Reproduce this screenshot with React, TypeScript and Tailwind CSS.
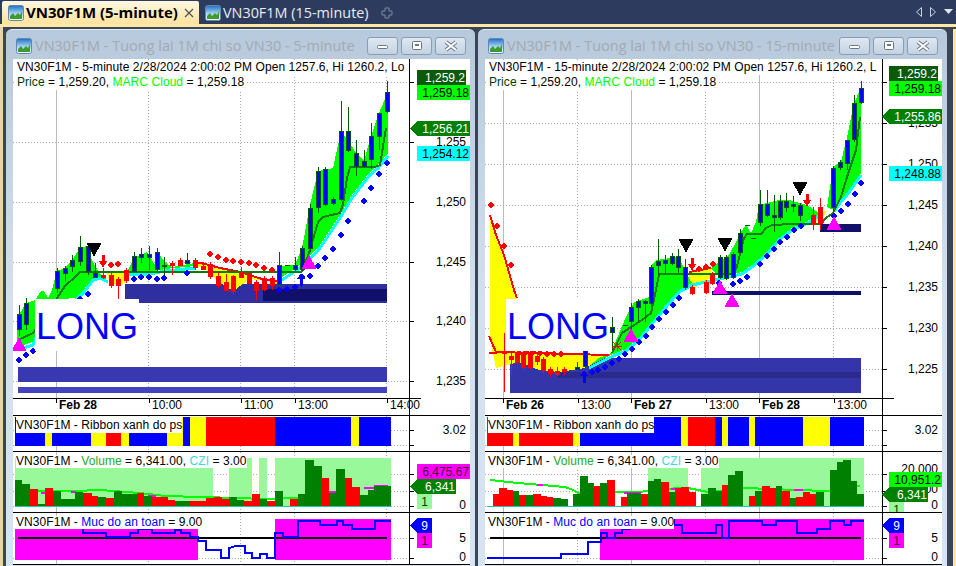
import type { ReactNode } from 'react';

type Candle = [number, number, number, number, number, 'b' | 'r'];
type Bar = [number, number, number, 'g' | 'r'];
type Seg = [number, number, string];
type Tag = { x: number; y: number; w: number; h?: number; fill: string; color: string; text: string; arrow?: boolean };

const FONT = "font-['Liberation_Sans',Arial,sans-serif]";
const GREEN = '#008000';
const LIME = '#00ff00';
const BLUE = '#0000ff';
const RED = '#ff0000';
const MAGENTA = '#ff00ff';
const YELLOW = '#ffff00';

interface ChartConfig {
  x0: number;
  axisX: number;
  title: string;
  head: string;
  grid: number[];
  solid: number[];
  prices: [string, number][];
  priceGrid: number[];
  times: [string, number, boolean][];
  rects: [number, number, number, number, string][];
  clouds: string[];
  yellows: string[];
  cyans: string[];
  redLines: string[];
  emaDark: string[];
  emaBright: string[];
  candles: Candle[];
  blueDots: [number, number][];
  redDots: [number, number][];
  blackTri: [number, number][];
  magentaTri: [number, number][];
  redArrows: [number, number][];
  blueArrows: [number, number][];
  priceTags: Tag[];
  longBox: [number, number];
  ribbon: Seg[];
  lightGreen: [number, number, number][];
  bars: Bar[];
  maLine: string;
  maBits: [number, number, number][];
  volTicks: [string, number][];
  volTags: Tag[];
  safetyFill: [number, number, number, number][];
  safetyLine: string;
  blackLine: [number, number];
  safetyTags: Tag[];
  axisRight: number;
}

const left: ChartConfig = {
  x0: 13,
  axisX: 409,
  title: 'VN30F1M - Tuong lai 1M chi so VN30 - 5-minute',
  head: 'VN30F1M - 5-minute 2/28/2024 2:00:02 PM Open 1257.6, Hi 1260.2, Lo',
  grid: [148, 240, 294, 386],
  solid: [56],
  priceGrid: [82, 142, 202, 262, 321, 381],
  prices: [['1,255', 142], ['1,250', 202], ['1,245', 262], ['1,240', 321], ['1,235', 381]],
  times: [['Feb 28', 59, true], ['10:00', 152, false], ['11:00', 244, false], ['13:00', 298, false], ['14:00', 390, false]],
  rects: [
    [125, 284, 262, 19, '#2f2f9f'],
    [263, 289, 124, 12, '#10106b'],
    [18, 367, 369, 15, '#3838b0'],
    [18, 387, 369, 6, '#4444bf'],
  ],
  clouds: [
    '17,347 17,335 19,315 26,303 35,300 41,291 44,291 48,298 52,290 57,271 65,268 72,260 80,248 86,246 93,262 100,274 108,280 100,277 93,279 85,288 75,298 50,300 33,342',
    '127,272 134,258 141,255 147,252 155,265 157,252 165,262 172,267 195,263 195,266 165,269 150,272',
    '279,279 279,266 295,265 302,248 310,205 318,171 333,168 341,131 348,140 356,153 364,161 371,136 379,113 388,92 388,153 378,165 370,172 362,182 352,195 340,215 330,230 320,245 310,256 300,265',
  ],
  yellows: [
    '107,273 126,272 127,283 110,285',
    '195,263 205,264 220,268 240,272 262,279 280,282 280,285 267,281 250,279 233,291 217,281 205,268 195,266',
  ],
  cyans: [
    '17,350 33,345 50,303 75,301 85,291 93,280 100,278 108,282',
    '127,274 150,274 165,271 195,268',
    '279,282 300,268 310,259 320,248 330,233 340,218 352,198 362,185 370,175 378,168 388,156',
  ],
  redLines: ['195,262 205,264 220,268 240,272 262,279 280,282'],
  emaDark: ['18,340 33,333 50,310 57,298 65,286 75,277 80,272', '302,272 310,250 318,222 323,217 340,213 343,204 347,178 350,167 375,167 380,165 386,128'],
  emaBright: ['80,272 302,272'],
  candles: [
    [19, 314, 329, 305, 336, 'b'], [26, 303, 324, 298, 330, 'b'],
    [57, 271, 288, 268, 293, 'b'], [65, 268, 273, 266, 281, 'b'], [72, 260, 266, 255, 272, 'b'], [80, 247, 261, 236, 266, 'b'],
    [88, 246, 271, 243, 275, 'b'], [95, 273, 277, 263, 278, 'b'], [103, 275, 277, 268, 279, 'r'], [111, 275, 285, 272, 288, 'r'],
    [118, 279, 285, 277, 299, 'r'], [126, 270, 280, 268, 283, 'r'], [134, 256, 271, 252, 273, 'b'], [141, 254, 257, 248, 263, 'b'],
    [149, 254, 257, 246, 270, 'b'], [157, 252, 269, 248, 271, 'b'], [164, 265, 266, 257, 277, 'b'], [172, 263, 265, 261, 275, 'r'],
    [180, 260, 265, 258, 266, 'r'], [187, 260, 263, 253, 264, 'b'], [195, 260, 267, 258, 270, 'r'], [203, 266, 269, 262, 270, 'r'],
    [210, 264, 276, 262, 279, 'r'], [218, 276, 285, 272, 288, 'r'], [226, 282, 290, 274, 291, 'r'], [233, 276, 291, 275, 295, 'r'],
    [241, 272, 277, 267, 278, 'r'], [249, 273, 283, 272, 284, 'r'], [256, 282, 290, 280, 300, 'r'], [264, 278, 289, 276, 291, 'r'],
    [272, 278, 285, 276, 290, 'r'], [279, 265, 284, 252, 286, 'b'], [287, 265, 265, 265, 265, 'b'], [295, 265, 269, 257, 271, 'b'],
    [302, 248, 269, 246, 271, 'b'], [310, 208, 248, 204, 252, 'b'], [318, 171, 207, 167, 213, 'b'], [325, 169, 204, 167, 206, 'b'],
    [333, 199, 203, 197, 205, 'b'], [341, 131, 199, 101, 201, 'b'], [348, 131, 150, 107, 152, 'b'], [356, 153, 166, 140, 176, 'b'],
    [364, 161, 166, 150, 168, 'b'], [371, 136, 159, 123, 169, 'b'], [379, 113, 136, 113, 150, 'b'], [387, 92, 111, 81, 113, 'b'],
  ],
  blueDots: [[19, 360], [26, 355], [33, 351], [80, 299], [88, 294], [134, 279], [141, 277], [149, 277], [157, 279], [164, 278], [187, 273], [279, 290], [287, 289], [295, 287], [302, 277], [310, 276], [318, 266], [325, 258], [333, 249], [341, 235], [348, 221], [364, 201], [371, 188], [379, 174], [387, 163]],
  redDots: [[111, 265], [118, 264], [210, 254], [218, 257], [226, 260], [233, 261], [241, 262], [249, 263], [256, 265], [264, 268], [272, 270]],
  blackTri: [[94, 243]],
  magentaTri: [[19, 337], [309, 255]],
  redArrows: [[103, 255]],
  blueArrows: [[301, 273]],
  priceTags: [
    { x: 417, y: 70, w: 49, fill: '#0a5a0a', color: '#ffffff', text: '1,259.2' },
    { x: 417, y: 85, w: 53, fill: LIME, color: '#000000', text: '1,259.18' },
    { x: 417, y: 121, w: 53, fill: GREEN, color: '#ffffff', text: '1,256.21', arrow: true },
    { x: 417, y: 146, w: 53, fill: '#00ffff', color: '#000000', text: '1,254.12' },
  ],
  longBox: [22, 240],
  ribbon: [[15, 45, BLUE], [45, 52, YELLOW], [52, 91, BLUE], [91, 106, YELLOW], [106, 121, RED], [121, 129, YELLOW], [129, 167, BLUE], [167, 183, YELLOW], [183, 190, BLUE], [190, 206, YELLOW], [206, 275, RED], [275, 351, BLUE], [351, 359, YELLOW], [359, 391, BLUE]],
  lightGreen: [[15, 213, 458], [229, 252, 458], [259, 267, 458], [275, 391, 458]],
  bars: [
    [15, 22, 480, 'g'], [22, 30, 484, 'g'], [29, 38, 489, 'r'], [38, 45, 504, 'g'], [45, 53, 488, 'r'], [53, 61, 491, 'g'], [61, 75, 499, 'g'], [75, 83, 492, 'g'], [83, 92, 493, 'r'], [92, 98, 496, 'r'],
    [98, 106, 497, 'g'], [106, 114, 498, 'r'], [114, 122, 491, 'g'], [122, 137, 494, 'g'], [137, 144, 493, 'r'], [144, 152, 496, 'g'], [152, 168, 497, 'r'], [168, 175, 500, 'r'], [175, 190, 501, 'g'], [190, 206, 501, 'r'],
    [206, 214, 498, 'r'], [214, 222, 497, 'r'], [222, 229, 499, 'r'], [229, 237, 497, 'g'], [237, 244, 500, 'g'], [244, 252, 501, 'r'], [252, 260, 494, 'r'], [260, 267, 499, 'g'], [267, 275, 501, 'r'], [275, 283, 491, 'g'],
    [290, 298, 499, 'r'], [298, 305, 494, 'g'], [305, 314, 460, 'g'], [314, 322, 466, 'g'], [322, 329, 478, 'r'], [329, 336, 493, 'g'], [336, 345, 469, 'g'], [345, 352, 478, 'r'], [352, 360, 487, 'r'], [360, 368, 495, 'g'], [368, 374, 490, 'g'], [374, 391, 486, 'g'],
  ],
  maLine: '38,491 60,491 75,491 100,490 140,493 165,496 200,497 240,498 262,499 300,498',
  maBits: [[41, 45, 492], [71, 76, 491], [148, 156, 495], [329, 336, 491], [364, 374, 487], [374, 388, 485]],
  volTicks: [['0', 505]],
  volTags: [
    { x: 417, y: 464, w: 53, fill: MAGENTA, color: '#400040', text: '6,475.67' },
    { x: 417, y: 479, w: 39, fill: GREEN, color: '#ffffff', text: '6,341', arrow: true },
    { x: 417, y: 494, w: 15, fill: '#99f899', color: '#004000', text: '1' },
  ],
  safetyFill: [[15, 529, 183, 31], [275, 519, 116, 41]],
  safetyLine: '83,529 83,533 106,533 106,537 130,537 130,533 138,533 138,529 152,529 152,533 175,533 175,530 181,530 181,533 190,533 190,537 198,537 198,541 206,541 206,550 221,550 221,558 229,558 229,548 236,546 245,546 245,553 252,553 252,558 260,558 260,554 267,554 267,558 275,558 275,533 283,533 283,537 298,537 298,521 320,521 320,525 337,525 337,521 343,521 343,525 352,525 352,529 375,529 375,521 391,521',
  blackLine: [18, 387],
  safetyTags: [
    { x: 417, y: 518, w: 15, fill: BLUE, color: '#ffffff', text: '9', arrow: true },
    { x: 417, y: 533, w: 15, fill: MAGENTA, color: '#400040', text: '1' },
  ],
  axisRight: 466,
};

const right: ChartConfig = {
  x0: 486,
  axisX: 883,
  title: 'VN30F1M - Tuong lai 1M chi so VN30 - 15-minute',
  head: 'VN30F1M - 15-minute 2/28/2024 2:00:02 PM Open 1257.6, Hi 1260.2, L',
  grid: [578, 706, 834],
  solid: [504, 632, 760],
  priceGrid: [82, 123, 164, 205, 246, 287, 328, 369],
  prices: [['1,255', 123], ['1,250', 164], ['1,245', 205], ['1,240', 246], ['1,235', 287], ['1,230', 328], ['1,225', 369]],
  times: [['Feb 26', 507, true], ['13:00', 582, false], ['Feb 27', 635, true], ['13:00', 710, false], ['Feb 28', 763, true], ['13:00', 838, false]],
  rects: [
    [511, 358, 351, 35, '#3535aa'],
    [558, 372, 304, 6, '#2b2b8f'],
    [713, 291, 149, 4, '#10106b'],
    [821, 224, 41, 8, '#10106b'],
  ],
  clouds: [
    '590,366 600,358 612,353 623,326 628,315 635,302 650,297 652,266 657,260 680,257 687,273 693,283 680,290 667,305 653,322 640,338 627,349 612,355',
    '712,268 730,255 738,240 742,232 747,225 752,233 757,222 760,205 780,200 790,200 808,205 820,213 820,214 807,222 793,228 780,238 767,253 753,265 743,272 720,277',
    '828,207 834,167 842,162 846,145 848,138 855,103 862,88 862,173 855,183 848,193 840,202 835,210',
  ],
  yellows: [
    '491,215 497,235 505,255 515,290 518,298 518,352 610,355 586,368 560,372 540,370 520,362 505,366 497,368 491,340',
    '690,273 712,268 712,278 700,283 693,293 690,283',
    '812,214 828,211 822,220 814,222',
  ],
  cyans: [
    '590,368 612,357 627,351 640,340 653,324 667,307 680,292 693,285 720,279 743,274 753,267 767,255 780,240 793,230 807,224 820,216',
    '835,212 840,204 848,195 855,185 862,175',
  ],
  redLines: ['491,215 497,235 505,255 515,290 518,298', '490,336 497,352 610,355', '490,353 498,353', '690,272 712,268'],
  emaDark: ['613,353 623,333 632,327 643,320 652,313 657,290 660,274', '737,270 740,258 745,238 748,234 762,234 767,228 773,225 793,224', '822,224 827,218 834,213 842,197 848,177 857,150 861,117'],
  emaBright: ['660,274 737,274', '793,224 822,224'],
  candles: [
    [505, 352, 353, 333, 392, 'r'], [512, 356, 359, 353, 375, 'r'], [518, 353, 362, 353, 365, 'r'], [524, 353, 367, 353, 370, 'r'], [531, 353, 367, 353, 369, 'r'], [538, 356, 361, 353, 365, 'r'],
    [544, 359, 370, 357, 373, 'r'], [551, 369, 373, 367, 377, 'r'], [558, 371, 374, 367, 376, 'r'], [565, 369, 371, 367, 375, 'r'], [578, 367, 369, 362, 370, 'b'], [586, 350, 366, 348, 368, 'b'],
    [613, 327, 332, 317, 350, 'b'], [626, 325, 325, 325, 325, 'b'], [632, 307, 321, 303, 333, 'b'], [639, 301, 307, 299, 323, 'b'], [646, 301, 303, 300, 322, 'b'], [652, 267, 303, 265, 307, 'b'],
    [659, 261, 265, 239, 275, 'b'], [666, 260, 263, 255, 273, 'b'], [673, 256, 263, 253, 265, 'b'], [679, 256, 267, 249, 273, 'b'], [686, 267, 287, 259, 290, 'b'], [693, 287, 293, 285, 295, 'r'],
    [707, 282, 292, 280, 294, 'r'], [713, 275, 283, 272, 285, 'r'], [721, 257, 277, 255, 279, 'b'], [727, 257, 278, 255, 280, 'b'], [734, 254, 277, 252, 279, 'b'], [741, 233, 252, 229, 254, 'b'],
    [748, 225, 225, 225, 225, 'b'], [754, 238, 238, 238, 238, 'b'], [761, 204, 222, 190, 226, 'b'], [768, 204, 215, 190, 217, 'b'], [775, 215, 217, 195, 232, 'b'], [781, 201, 217, 195, 220, 'b'],
    [787, 201, 207, 193, 212, 'b'], [794, 204, 206, 196, 212, 'b'], [801, 205, 215, 203, 221, 'b'], [814, 215, 224, 207, 230, 'r'], [821, 207, 223, 198, 230, 'r'], [834, 168, 207, 166, 214, 'b'],
    [841, 162, 167, 160, 170, 'b'], [848, 140, 163, 140, 170, 'b'], [855, 103, 139, 95, 142, 'b'], [862, 88, 102, 81, 104, 'b'],
  ],
  blueDots: [[593, 372], [599, 370], [606, 367], [613, 363], [620, 359], [626, 354], [633, 349], [640, 342], [647, 336], [653, 327], [660, 319], [667, 312], [674, 305], [680, 298], [720, 283], [734, 284], [741, 281], [748, 277], [761, 264], [768, 256], [775, 249], [781, 242], [788, 237], [795, 230], [802, 226], [835, 216], [842, 211], [849, 204], [856, 194], [862, 183]],
  redDots: [[492, 205], [498, 226], [505, 246], [512, 265], [520, 353], [527, 352], [534, 352], [541, 353], [548, 354], [555, 354], [562, 354], [700, 269], [707, 267], [714, 264]],
  blackTri: [[687, 239], [726, 238], [801, 182]],
  magentaTri: [[632, 328], [721, 280], [733, 293], [835, 216]],
  redArrows: [[693, 258], [808, 194]],
  blueArrows: [[585, 370]],
  priceTags: [
    { x: 890, y: 66, w: 49, fill: '#0a5a0a', color: '#ffffff', text: '1,259.2' },
    { x: 890, y: 81, w: 53, fill: LIME, color: '#000000', text: '1,259.18' },
    { x: 890, y: 109, w: 53, fill: GREEN, color: '#ffffff', text: '1,255.86', arrow: true },
    { x: 890, y: 166, w: 53, fill: '#00ffff', color: '#000000', text: '1,248.88' },
  ],
  longBox: [21, 240],
  ribbon: [[488, 514, RED], [514, 520, YELLOW], [520, 574, RED], [574, 581, YELLOW], [581, 682, BLUE], [682, 689, YELLOW], [689, 716, RED], [716, 723, BLUE], [723, 729, YELLOW], [729, 750, BLUE], [750, 756, YELLOW], [756, 804, BLUE], [804, 831, YELLOW], [831, 865, BLUE]],
  lightGreen: [[649, 689, 458], [702, 865, 458]],
  bars: [
    [494, 500, 494, 'r'], [500, 508, 488, 'r'], [508, 514, 490, 'r'], [514, 520, 491, 'g'], [520, 527, 495, 'r'], [527, 534, 495, 'g'], [534, 542, 494, 'r'], [542, 548, 496, 'r'], [548, 554, 497, 'r'], [554, 562, 498, 'g'], [562, 569, 499, 'g'],
    [574, 581, 494, 'g'], [581, 589, 476, 'g'], [589, 595, 483, 'g'], [595, 601, 486, 'r'], [601, 608, 483, 'g'], [608, 616, 480, 'r'], [622, 628, 497, 'r'], [628, 642, 493, 'g'], [642, 649, 494, 'r'], [649, 655, 481, 'g'], [655, 662, 479, 'g'],
    [662, 670, 482, 'r'], [670, 676, 492, 'g'], [676, 682, 488, 'r'], [682, 690, 487, 'r'], [690, 697, 492, 'r'], [702, 709, 494, 'g'], [709, 717, 488, 'g'], [717, 723, 491, 'g'], [723, 729, 485, 'r'], [729, 736, 475, 'g'], [736, 744, 471, 'g'],
    [750, 756, 496, 'r'], [756, 763, 491, 'g'], [763, 771, 486, 'r'], [771, 777, 488, 'r'], [777, 783, 486, 'g'], [783, 791, 491, 'r'], [791, 797, 498, 'g'], [797, 804, 497, 'r'], [804, 811, 492, 'r'], [811, 817, 494, 'r'], [817, 825, 492, 'g'],
    [831, 838, 470, 'g'], [838, 844, 462, 'g'], [844, 852, 460, 'g'], [852, 858, 481, 'g'], [858, 865, 494, 'g'],
  ],
  maLine: '491,480 509,482 519,483 543,485 566,487 574,490 579,493 626,492 663,491 676,488 689,488 709,492 730,490 746,488 796,490 829,491 861,486',
  maBits: [[538, 544, 484], [625, 642, 492], [672, 680, 488], [723, 729, 490], [795, 804, 489]],
  volTicks: [['20,000', 469], ['10,000', 489], ['0', 505]],
  volTags: [
    { x: 890, y: 472, w: 53, fill: LIME, color: '#000000', text: '10,951.2' },
    { x: 890, y: 487, w: 39, fill: GREEN, color: '#ffffff', text: '6,341', arrow: true },
    { x: 890, y: 502, w: 15, fill: '#99f899', color: '#004000', text: '1' },
  ],
  safetyFill: [[601, 529, 264, 31], [673, 519, 192, 10]],
  safetyLine: '488,558 562,558 562,554 589,554 589,542 602,542 602,533 608,533 608,538 616,538 616,533 623,533 623,529 629,529 675,520 675,525 683,525 683,533 717,533 717,525 723,525 723,538 730,538 730,521 763,521 763,525 777,525 777,521 798,521 798,533 818,533 818,529 831,529 831,521 845,521 845,525 852,525 852,521 865,521',
  blackLine: [491, 862],
  safetyTags: [
    { x: 890, y: 518, w: 15, fill: BLUE, color: '#ffffff', text: '9', arrow: true },
    { x: 890, y: 533, w: 15, fill: MAGENTA, color: '#400040', text: '1' },
  ],
  axisRight: 939,
};

function ChartIcon() {
  return (
    <svg width="16" height="16" viewBox="0 0 16 16" className="shrink-0">
      <defs>
        <linearGradient id="ico" x1="0" y1="0" x2="0" y2="1">
          <stop offset="0" stopColor="#1f6fc4" />
          <stop offset="0.55" stopColor="#a8d4f5" />
          <stop offset="1" stopColor="#ffffff" />
        </linearGradient>
      </defs>
      <rect x="0.5" y="0.5" width="15" height="15" rx="2" fill="url(#ico)" stroke="#5d88b0" />
      <path d="M2 14 L2 11 L5 8 L7 11 L10 8 L12 10 L14 6 L14 14 Z" fill="#3f9a32" />
    </svg>
  );
}

function WinButton({ kind }: { kind: 'min' | 'max' | 'close' }) {
  return (
    <div className="w-[31px] h-[18px] rounded-[3px] border border-[#8b9db3] bg-gradient-to-b from-[#dfe8f2] to-[#c3d2e2] flex items-center justify-center">
      <svg width="14" height="12" viewBox="0 0 14 12">
        {kind === 'min' && <rect x="1.5" y="5.5" width="10" height="3" rx="1" fill="#fff" stroke="#6b7684" />}
        {kind === 'max' && (
          <>
            <rect x="2.5" y="1.5" width="9" height="8" rx="1" fill="#fff" stroke="#6b7684" />
            <rect x="5" y="4" width="4" height="2" fill="#6b7684" />
          </>
        )}
        {kind === 'close' && (
          <>
            <path d="M2 2 L12 10 M12 2 L2 10" stroke="#6b7684" strokeWidth="4" />
            <path d="M2 2 L12 10 M12 2 L2 10" stroke="#fff" strokeWidth="2" />
          </>
        )}
      </svg>
    </div>
  );
}

function GridLines({ cfg, top, bottom }: { cfg: ChartConfig; top: number; bottom: number }) {
  return (
    <>
      {cfg.grid.map((x) => (
        <line key={x} x1={x + 0.5} x2={x + 0.5} y1={top} y2={bottom} stroke="#aaaaaa" strokeDasharray="1 2" />
      ))}
      {cfg.solid.map((x) => (
        <line key={x} x1={x + 0.5} x2={x + 0.5} y1={top} y2={bottom} stroke="#bbbbbb" />
      ))}
    </>
  );
}

function AxisLine({ cfg, top, bottom }: { cfg: ChartConfig; top: number; bottom: number }) {
  return <line x1={cfg.axisX + 0.5} x2={cfg.axisX + 0.5} y1={top} y2={bottom} stroke="#000" />;
}

function HTick({ cfg, y }: { cfg: ChartConfig; y: number }) {
  return (
    <>
      <line x1={cfg.x0} x2={cfg.axisX} y1={y + 0.5} y2={y + 0.5} stroke="#aaaaaa" strokeDasharray="1 2" />
      <line x1={cfg.axisX} x2={cfg.axisX + 5} y1={y + 0.5} y2={y + 0.5} stroke="#000" />
    </>
  );
}

function PriceTag({ tag }: { tag: Tag }) {
  const h = tag.h ?? 15;
  const small = tag.w <= 15;
  return (
    <g>
      {tag.arrow && <polygon points={`${tag.x - 7},${tag.y + h / 2} ${tag.x},${tag.y} ${tag.x},${tag.y + h}`} fill={tag.fill} />}
      <rect x={tag.x} y={tag.y} width={tag.w} height={h} fill={tag.fill} />
      <text x={small ? tag.x + tag.w / 2 : tag.x + tag.w - 1} y={tag.y + 12} textAnchor={small ? 'middle' : 'end'} fontSize="12" fill={tag.color}>
        {tag.text}
      </text>
    </g>
  );
}

function Pane({ cfg, top, height, children, overlay }: { cfg: ChartConfig; top: number; height: number; children: ReactNode; overlay?: ReactNode }) {
  return (
    <div className="relative border-b border-black">
      <svg width="457" height={height} viewBox={`${cfg.x0} ${top} 457 ${height}`} className="block" fontFamily="Liberation Sans, Arial, sans-serif" shapeRendering="crispEdges">
        {children}
      </svg>
      {overlay}
    </div>
  );
}

function PricePane({ cfg }: { cfg: ChartConfig }) {
  return (
    <Pane
      cfg={cfg}
      top={59}
      height={356}
      overlay={
        <>
          <div className="absolute left-[3px] top-[1px] text-[12px] leading-[15px] tracking-[0.06px] text-black bg-white px-px whitespace-nowrap">{cfg.head}</div>
          <div className="absolute left-[3px] top-[16px] text-[12px] leading-[15px] tracking-[0.06px] text-black bg-white px-px whitespace-nowrap">
            <span className="text-[#004000]">Price</span> = 1,259.20, <span className="text-[#00ff00]">MARC Cloud</span> = 1,259.18
          </div>
          <div
            className="absolute bg-white h-[52px] w-[104px] pl-[1px] text-[36px] leading-[55px] text-[#0000ff] whitespace-nowrap overflow-hidden"
            style={{ left: cfg.longBox[0], top: cfg.longBox[1] }}
          >
            LONG
          </div>
        </>
      }
    >
      <GridLines cfg={cfg} top={59} bottom={398} />
      {cfg.priceGrid.map((y) => (
        <HTick key={y} cfg={cfg} y={y} />
      ))}
      {cfg.rects.map(([x, y, w, h, c], i) => (
        <rect key={i} x={x} y={y} width={w} height={h} fill={c} />
      ))}
      {cfg.yellows.map((p, i) => (
        <polygon key={i} points={p} fill={YELLOW} />
      ))}
      {cfg.clouds.map((p, i) => (
        <polygon key={i} points={p} fill={LIME} />
      ))}
      {cfg.cyans.map((p, i) => (
        <polyline key={i} points={p} fill="none" stroke="#00ffff" strokeWidth="3" />
      ))}
      {cfg.redLines.map((p, i) => (
        <polyline key={i} points={p} fill="none" stroke={RED} strokeWidth="2" />
      ))}
      {cfg.emaDark.map((p, i) => (
        <polyline key={i} points={p} fill="none" stroke="#1f7a1f" strokeWidth="2" />
      ))}
      {cfg.emaBright.map((p, i) => (
        <polyline key={i} points={p} fill="none" stroke={GREEN} strokeWidth="2" />
      ))}
      {cfg.candles.map(([x, t, b, wt, wb, kind], i) => {
        const c = kind === 'b' ? '#005a00' : RED;
        return (
          <g key={i}>
            <line x1={x + 0.5} x2={x + 0.5} y1={wt} y2={wb} stroke={c} />
            {b - t < 1 ? (
              <line x1={x - 2} x2={x + 3} y1={t + 0.5} y2={t + 0.5} stroke={c} />
            ) : (
              <rect x={x - 1.5} y={t + 0.5} width={4} height={b - t} fill={kind === 'b' ? BLUE : RED} stroke={c} />
            )}
          </g>
        );
      })}
      {cfg.blueDots.map(([x, y], i) => (
        <polygon key={i} points={`${x - 3},${y} ${x - 2},${y - 2} ${x},${y - 3} ${x + 2},${y - 2} ${x + 3},${y} ${x + 2},${y + 2} ${x},${y + 3} ${x - 2},${y + 2}`} fill={BLUE} />
      ))}
      {cfg.redDots.map(([x, y], i) => (
        <polygon key={i} points={`${x - 3},${y} ${x - 2},${y - 2} ${x},${y - 3} ${x + 2},${y - 2} ${x + 3},${y} ${x + 2},${y + 2} ${x},${y + 3} ${x - 2},${y + 2}`} fill={RED} />
      ))}
      {cfg.blackTri.map(([x, y], i) => (
        <polygon key={i} points={`${x - 7.5},${y} ${x + 7.5},${y} ${x},${y + 14}`} fill="#000" />
      ))}
      {cfg.magentaTri.map(([x, y], i) => (
        <polygon key={i} points={`${x},${y} ${x + 7.5},${y + 14} ${x - 7.5},${y + 14}`} fill={MAGENTA} />
      ))}
      {cfg.redArrows.map(([x, y], i) => (
        <polygon key={i} points={`${x - 1.5},${y} ${x + 1.5},${y} ${x + 1.5},${y + 6} ${x + 4},${y + 6} ${x},${y + 13} ${x - 4},${y + 6} ${x - 1.5},${y + 6}`} fill={RED} />
      ))}
      {cfg.blueArrows.map(([x, y], i) => (
        <polygon key={i} points={`${x},${y} ${x + 4},${y + 6} ${x + 1.5},${y + 6} ${x + 1.5},${y + 13} ${x - 1.5},${y + 13} ${x - 1.5},${y + 6} ${x - 4},${y + 6}`} fill={BLUE} />
      ))}
      {cfg.x0 === 486 && <path d="M614 342 L622 350 M622 342 L614 350 M618 341 L618 351 M613 346 L623 346" stroke={RED} />}
      <AxisLine cfg={cfg} top={59} bottom={415} />
      <line x1={cfg.x0} x2={cfg.axisX + 12} y1={398.5} y2={398.5} stroke="#000" />
      {cfg.prices.map(([t, y]) => (
        <text key={t} x={cfg.axisRight} y={y + 4} textAnchor="end" fontSize="12">
          {t}
        </text>
      ))}
      {cfg.priceTags.map((t) => (
        <PriceTag key={t.text} tag={t} />
      ))}
      {cfg.times.map(([t, x, bold], i) => (
        <g key={i}>
          <line x1={x - 2.5} x2={x - 2.5} y1={398} y2={403} stroke="#000" />
          <text x={x} y={409} fontSize="12" fontWeight={bold ? 700 : 400}>
            {t}
          </text>
        </g>
      ))}
    </Pane>
  );
}

function RibbonPane({ cfg }: { cfg: ChartConfig }) {
  return (
    <Pane
      cfg={cfg}
      top={416}
      height={35}
      overlay={
        <div className="absolute left-[3px] top-[1px] h-[16px] pt-px text-[12px] leading-[15px] tracking-[0.06px] text-black bg-white whitespace-nowrap">VN30F1M - Ribbon xanh do ps</div>
      }
    >
      <GridLines cfg={cfg} top={416} bottom={451} />
      <HTick cfg={cfg} y={430} />
      <HTick cfg={cfg} y={445} />
      {cfg.ribbon.map(([a, b, c], i) => (
        <rect key={i} x={a} y={417} width={b - a} height={29} fill={c} />
      ))}
      <AxisLine cfg={cfg} top={416} bottom={451} />
      <text x={cfg.axisRight} y={434} textAnchor="end" fontSize="12">
        3.02
      </text>
    </Pane>
  );
}

function VolumePane({ cfg }: { cfg: ChartConfig }) {
  return (
    <Pane
      cfg={cfg}
      top={452}
      height={60}
      overlay={
        <div className="absolute left-[3px] top-[3px] h-[13px] text-[12px] leading-[13px] tracking-[0.06px] text-black bg-white whitespace-nowrap">
          VN30F1M - <span className="text-[#22aa22]">Volume</span> = 6,341.00, <span className="text-[#40d8d8]">CZI</span> = 3.00
        </div>
      }
    >
      <GridLines cfg={cfg} top={452} bottom={512} />
      <HTick cfg={cfg} y={474} />
      <HTick cfg={cfg} y={491} />
      <HTick cfg={cfg} y={506} />
      {cfg.lightGreen.map(([a, b, t], i) => (
        <rect key={i} x={a} y={t} width={b - a} height={506 - t} fill="#99f899" />
      ))}
      <polyline points={cfg.maLine} fill="none" stroke={LIME} strokeWidth="2" />
      {cfg.maBits.map(([a, b, y], i) => (
        <rect key={i} x={a} y={y} width={b - a} height={2} fill={MAGENTA} />
      ))}
      {cfg.bars.map(([a, b, t, k], i) => (
        <rect key={i} x={a} y={t} width={b - a} height={506 - t} fill={k === 'g' ? GREEN : RED} />
      ))}
      <line x1={cfg.x0 + 2} x2={cfg.axisX - 18} y1={506} y2={506} stroke="#22c8a0" />
      <AxisLine cfg={cfg} top={452} bottom={512} />
      {cfg.volTicks.map(([t, y]) => (
        <text key={t} x={cfg.axisRight} y={y + 4} textAnchor="end" fontSize="12">
          {t}
        </text>
      ))}
      {cfg.volTags.map((t) => (
        <PriceTag key={t.text} tag={t} />
      ))}
    </Pane>
  );
}

function SafetyPane({ cfg }: { cfg: ChartConfig }) {
  return (
    <Pane
      cfg={cfg}
      top={513}
      height={51}
      overlay={
        <div className="absolute left-[3px] top-[3px] h-[13px] text-[12px] leading-[13px] tracking-[0.06px] text-black bg-white whitespace-nowrap">
          VN30F1M - <span className="text-[#0000ff]">Muc do an toan</span> = 9.00
        </div>
      }
    >
      <GridLines cfg={cfg} top={513} bottom={564} />
      <HTick cfg={cfg} y={538} />
      <HTick cfg={cfg} y={558} />
      {cfg.safetyFill.map(([x, y, w, h], i) => (
        <rect key={i} x={x} y={y} width={w} height={h} fill={MAGENTA} />
      ))}
      <line x1={cfg.blackLine[0]} x2={cfg.blackLine[1]} y1={538} y2={538} stroke="#000" strokeWidth="2" />
      <polyline points={cfg.safetyLine} fill="none" stroke={BLUE} strokeWidth="2" />
      <AxisLine cfg={cfg} top={513} bottom={564} />
      <text x={cfg.axisRight} y={542} textAnchor="end" fontSize="12">
        5
      </text>
      <text x={cfg.axisRight} y={561} textAnchor="end" fontSize="12">
        0
      </text>
      {cfg.safetyTags.map((t) => (
        <PriceTag key={t.text} tag={t} />
      ))}
    </Pane>
  );
}

function ChartWindow({ cfg }: { cfg: ChartConfig }) {
  return (
    <div className="w-[470px] rounded-t-[6px] bg-gradient-to-b from-[#b7c9dc] via-[#d3e0ee] to-[#d6e4f3] bg-no-repeat border-t border-[#e4ecf5] overflow-hidden">
      <div className="h-[29px] flex items-center pl-[10px] pr-[9px] pt-[2px]">
        <ChartIcon />
        <span className="ml-[3px] text-[14.5px] text-[#a3a9b1] font-['Open_Sans',sans-serif] whitespace-nowrap flex-1">{cfg.title}</span>
        <div className="flex gap-[3px] shrink-0">
          <WinButton kind="min" />
          <WinButton kind="max" />
          <WinButton kind="close" />
        </div>
      </div>
      <div className={`ml-[7px] w-[457px] bg-white ${FONT}`}>
        <PricePane cfg={cfg} />
        <RibbonPane cfg={cfg} />
        <VolumePane cfg={cfg} />
        <SafetyPane cfg={cfg} />
      </div>
    </div>
  );
}

export default function App() {
  return (
    <div className="w-[956px] h-[566px] overflow-hidden bg-[#2d3c5e] flex flex-col">
      {/* Tabs */}
      <div className="h-6 flex items-end pl-[2px] pr-[3px] font-['Open_Sans',sans-serif] shrink-0">
        <div className="h-[23px] w-[197px] rounded-t-[2px] bg-gradient-to-b from-[#fef8e0] to-[#ffe29f] flex items-center pl-[6px] gap-[2px]">
          <ChartIcon />
          <span className="text-[15px] font-bold text-black whitespace-nowrap">VN30F1M (5-minute)</span>
          <svg width="10" height="10" viewBox="0 0 10 10" className="ml-[4px]">
            <path d="M1 1 L9 9 M9 1 L1 9" stroke="#555" strokeWidth="1.3" />
          </svg>
        </div>
        <div className="h-[23px] flex items-center pl-[6px] gap-[2px]">
          <ChartIcon />
          <span className="text-[14.4px] text-[#e6edf5] whitespace-nowrap">VN30F1M (15-minute)</span>
          <svg width="12" height="12" viewBox="0 0 12 12" className="ml-[10px]">
            <path d="M4 1 H8 V4 H11 V8 H8 V11 H4 V8 H1 V4 H4 Z" fill="none" stroke="#7d8aa3" />
          </svg>
        </div>
        <div className="ml-auto h-[23px] flex items-center gap-[8px] pb-[2px]">
          <svg width="6" height="10" viewBox="0 0 6 10">
            <path d="M5.5 0.5 L0.5 5 L5.5 9.5 Z" fill="none" stroke="#c9d3e0" />
          </svg>
          <svg width="6" height="10" viewBox="0 0 6 10">
            <path d="M0.5 0.5 L5.5 5 L0.5 9.5 Z" fill="none" stroke="#c9d3e0" />
          </svg>
          <svg width="9" height="5" viewBox="0 0 9 5">
            <path d="M0 0 H9 L4.5 5 Z" fill="#dfe6ef" />
          </svg>
        </div>
      </div>
      <div className="h-[3px] bg-[#ffe8a6] shrink-0" />
      {/* Charts */}
      <div className="flex-1 flex gap-[3px] pt-[2px] pl-[3px] border-l-[3px] border-[#e6d6a6] bg-[#3b4558]">
        <ChartWindow cfg={left} />
        <ChartWindow cfg={right} />
        <div className="ml-[3px] w-[3px] bg-[#ffe8a6]" />
      </div>
    </div>
  );
}
